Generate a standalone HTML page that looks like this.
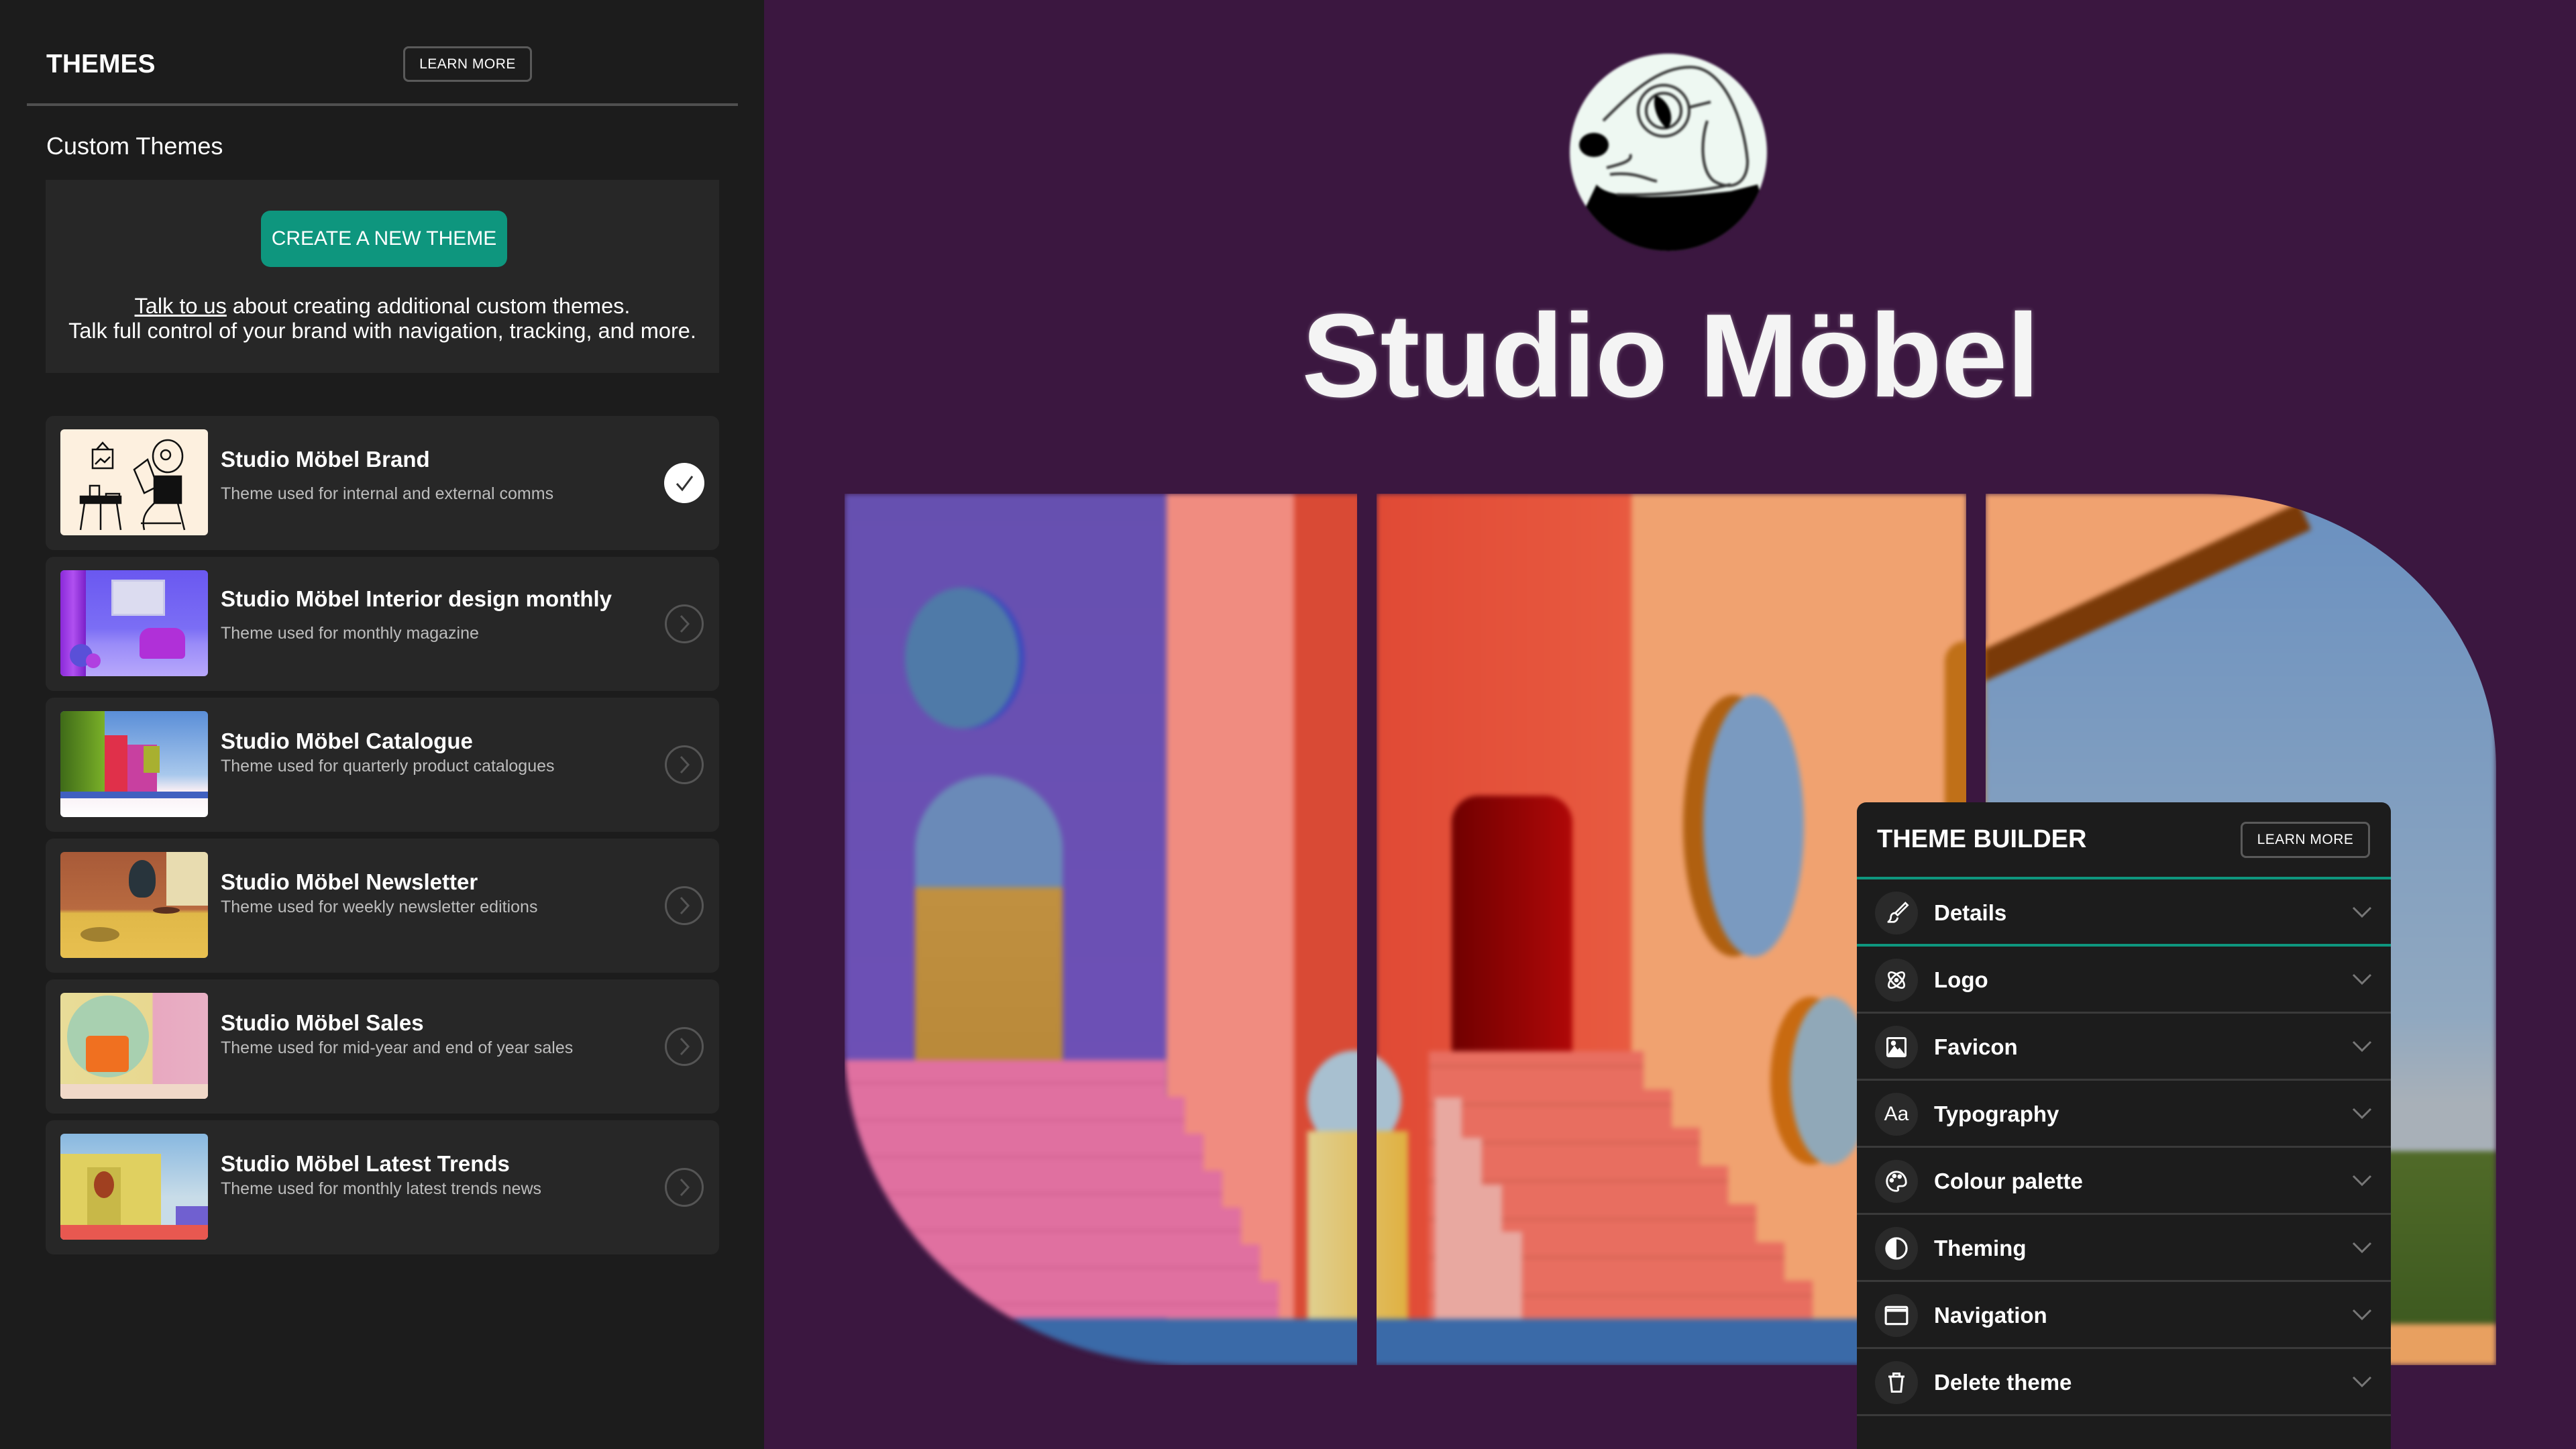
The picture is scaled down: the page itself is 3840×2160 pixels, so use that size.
<!DOCTYPE html>
<html><head><meta charset="utf-8"><style>
*{margin:0;padding:0;box-sizing:border-box}
body{width:3840px;height:2160px;overflow:hidden;background:#3b1740;font-family:"Liberation Sans",sans-serif;position:relative;color:#fff}
.left{position:absolute;left:0;top:0;width:1139px;height:2160px;background:#1c1c1c}
.abs{position:absolute}
.btn-o{position:absolute;border:3px solid #5a5a5a;border-radius:8px;color:#fff;font-size:21px;display:flex;align-items:center;justify-content:center;letter-spacing:0.5px}
.item{position:absolute;left:68px;width:1004px;height:200px;background:#272727;border-radius:12px}
.thumb{position:absolute;left:22px;top:20px;width:220px;height:158px;border-radius:6px;overflow:hidden}
.it{position:absolute;left:261px;font-size:33px;font-weight:bold;white-space:nowrap}
.is{position:absolute;left:261px;font-size:25px;color:#bdbdbd;white-space:nowrap}
.chev{position:absolute;left:923px;top:71px;width:58px;height:58px;border:3px solid #555;border-radius:50%}
.tb{position:absolute;left:2768px;top:1196px;width:796px;height:964px;background:#1c1c1c;border-radius:14px 14px 0 0;overflow:hidden}
.row{position:absolute;left:0;width:796px;height:100px;border-bottom:3px solid #3a3a3a}
.ic{position:absolute;left:27px;top:18px;width:64px;height:64px;border-radius:50%;background:#2a2a2a;display:flex;align-items:center;justify-content:center}
.rt{position:absolute;left:115px;top:0;line-height:100px;font-size:33px;font-weight:bold}
.dn{position:absolute;left:738px;top:40px}
</style></head><body>
<div class="left">
  <div class="abs" style="left:69px;top:74px;font-size:39px;font-weight:bold;">THEMES</div>
  <div class="btn-o" style="left:601px;top:69px;width:192px;height:53px;">LEARN MORE</div>
  <div class="abs" style="left:40px;top:154px;width:1060px;height:4px;background:#505050"></div>
  <div class="abs" style="left:69px;top:197px;font-size:36px;">Custom Themes</div>
  <div class="abs" style="left:68px;top:268px;width:1004px;height:288px;background:#272727"></div>
  <div class="abs" style="left:389px;top:314px;width:367px;height:84px;background:#0e967e;border-radius:14px;font-size:30px;display:flex;align-items:center;justify-content:center">CREATE A NEW THEME</div>
  <div class="abs" style="left:68px;top:438px;width:1004px;text-align:center;font-size:32.5px;line-height:37px"><span style="text-decoration:underline">Talk to us</span> about creating additional custom themes.<br>Talk full control of your brand with navigation, tracking, and more.</div>

  <div class="item" style="top:620px">
    <div class="thumb" style="background:#fdf0df">
      <svg width="220" height="158" viewBox="0 0 220 158" fill="none" stroke="#111" stroke-width="2.5">
        <rect x="48" y="30" width="30" height="28"/><path d="M52 52l8-8 6 5 8-8"/><path d="M54 30l9-10 9 10"/>
        <rect x="30" y="100" width="60" height="10" fill="#111"/><path d="M36 110l-6 40M84 110l6 40M60 110v40"/>
        <rect x="44" y="84" width="14" height="16"/><path d="M68 96h20v4H68z"/>
        <path d="M110 60l20-15 15 40-20 10z" fill="#fdf0df"/>
        <ellipse cx="160" cy="40" rx="22" ry="24" fill="#fdf0df"/><circle cx="157" cy="38" r="7"/>
        <path d="M140 70h40v40h-40z" fill="#111"/><path d="M140 110c-10 10-20 20-15 40M175 110l10 40M120 140h60"/>
      </svg>
    </div>
    <div class="it" style="top:46px">Studio Möbel Brand</div>
    <div class="is" style="top:102px">Theme used for internal and external comms</div>
    <div class="abs" style="left:922px;top:70px;width:60px;height:60px;border-radius:50%;background:#fff">
      <svg width="60" height="60" viewBox="0 0 60 60"><path d="M19 31l8 9 15-20" fill="none" stroke="#333" stroke-width="3"/></svg>
    </div>
  </div>

  <div class="item" style="top:830px">
    <div class="thumb" style="background:linear-gradient(180deg,#6a58f0 0%,#7b6ef5 55%,#9a8cf8 70%,#b8a8fb 100%)">
      <div class="abs" style="left:0;top:0;width:38px;height:158px;background:linear-gradient(90deg,#8a2ad8,#b050f0,#7a20c8)"></div>
      <div class="abs" style="left:76px;top:14px;width:80px;height:54px;background:#dcdcf0;border:3px solid #c8c8ea"></div>
      <div class="abs" style="left:118px;top:86px;width:68px;height:46px;background:#b030d8;border-radius:16px 16px 6px 6px"></div>
      <div class="abs" style="left:14px;top:110px;width:34px;height:34px;border-radius:50%;background:#5a50d8"></div>
      <div class="abs" style="left:38px;top:124px;width:22px;height:22px;border-radius:50%;background:#b040e0"></div>
    </div>
    <div class="it" style="top:44px">Studio Möbel Interior design monthly</div>
    <div class="is" style="top:100px">Theme used for monthly magazine</div>
    <div class="chev"><svg width="52" height="52" viewBox="0 0 52 52"><path d="M21 14l11 12-11 12" fill="none" stroke="#555" stroke-width="3"/></svg></div>
  </div>

  <div class="item" style="top:1040px">
    <div class="thumb" style="background:linear-gradient(180deg,#5a8ed8 0%,#a8c8ec 60%,#f8eef4 75%,#fff 100%)">
      <div class="abs" style="left:0;top:0;width:66px;height:120px;background:linear-gradient(90deg,#3e6a18,#7ab028)"></div>
      <div class="abs" style="left:66px;top:36px;width:34px;height:84px;background:#e0304a"></div>
      <div class="abs" style="left:100px;top:50px;width:44px;height:70px;background:#c840a0"></div>
      <div class="abs" style="left:124px;top:52px;width:24px;height:40px;background:#a8b030"></div>
      <div class="abs" style="left:0;top:120px;width:220px;height:10px;background:#4060c0"></div>
    </div>
    <div class="it" style="top:46px">Studio Möbel Catalogue</div>
    <div class="is" style="top:88px">Theme used for quarterly product catalogues</div>
    <div class="chev"><svg width="52" height="52" viewBox="0 0 52 52"><path d="M21 14l11 12-11 12" fill="none" stroke="#555" stroke-width="3"/></svg></div>
  </div>

  <div class="item" style="top:1250px">
    <div class="thumb" style="background:linear-gradient(180deg,#a85a38 0%,#b86a40 54%,#e0b848 58%,#e8c050 100%)">
      <div class="abs" style="left:158px;top:0;width:62px;height:80px;background:#e8dcb0"></div>
      <div class="abs" style="left:102px;top:12px;width:40px;height:56px;border-radius:50% 50% 40% 40%;background:#28343c"></div>
      <div class="abs" style="left:138px;top:82px;width:40px;height:10px;border-radius:50%;background:#5a3020"></div>
      <div class="abs" style="left:30px;top:112px;width:58px;height:22px;border-radius:50%;background:#a08030"></div>
    </div>
    <div class="it" style="top:46px">Studio Möbel Newsletter</div>
    <div class="is" style="top:88px">Theme used for weekly newsletter editions</div>
    <div class="chev"><svg width="52" height="52" viewBox="0 0 52 52"><path d="M21 14l11 12-11 12" fill="none" stroke="#555" stroke-width="3"/></svg></div>
  </div>

  <div class="item" style="top:1460px">
    <div class="thumb" style="background:linear-gradient(90deg,#e8dc98 0%,#e8d890 62%,#e8a8c0 63%,#e8b0c4 100%)">
      <div class="abs" style="left:10px;top:4px;width:122px;height:122px;border-radius:50%;background:#a8d0b0"></div>
      <div class="abs" style="left:38px;top:64px;width:64px;height:54px;background:#f07020;border-radius:6px"></div>
      <div class="abs" style="left:0;top:136px;width:220px;height:22px;background:#f0d8c8"></div>
    </div>
    <div class="it" style="top:46px">Studio Möbel Sales</div>
    <div class="is" style="top:88px">Theme used for mid-year and end of year sales</div>
    <div class="chev"><svg width="52" height="52" viewBox="0 0 52 52"><path d="M21 14l11 12-11 12" fill="none" stroke="#555" stroke-width="3"/></svg></div>
  </div>

  <div class="item" style="top:1670px">
    <div class="thumb" style="background:linear-gradient(180deg,#88b8e0 0%,#c8dce8 60%)">
      <div class="abs" style="left:0;top:30px;width:150px;height:108px;background:#e0d060"></div>
      <div class="abs" style="left:40px;top:50px;width:50px;height:88px;background:#c8b848"></div>
      <div class="abs" style="left:50px;top:56px;width:30px;height:40px;border-radius:50%;background:#a04020"></div>
      <div class="abs" style="left:172px;top:108px;width:48px;height:30px;background:#7060d0"></div>
      <div class="abs" style="left:0;top:136px;width:220px;height:22px;background:#e85850"></div>
    </div>
    <div class="it" style="top:46px">Studio Möbel Latest Trends</div>
    <div class="is" style="top:88px">Theme used for monthly latest trends news</div>
    <div class="chev"><svg width="52" height="52" viewBox="0 0 52 52"><path d="M21 14l11 12-11 12" fill="none" stroke="#555" stroke-width="3"/></svg></div>
  </div>
</div>

<!-- logo -->
<svg class="abs" style="left:2320px;top:60px;filter:blur(1.5px)" width="340" height="340" viewBox="0 0 340 340">
  <defs><clipPath id="c"><circle cx="167" cy="167" r="147"/></clipPath></defs>
  <circle cx="167" cy="167" r="147" fill="#eef8f2"/>
  <path d="M60 215 C80 240 170 235 260 225 L300 215 L340 340 L0 340Z" fill="#000" clip-path="url(#c)"/>
  <g fill="none" stroke="#333" stroke-width="4">
    <path d="M70 120 C110 80 150 40 200 40 C250 40 280 120 285 180 C285 215 260 225 235 210 C215 195 215 150 225 120"/>
    <circle cx="160" cy="105" r="38"/><circle cx="160" cy="105" r="26"/>
    <path d="M198 100 L230 92"/>
    <path d="M75 190 C95 185 115 180 110 170 M80 200 C120 195 140 210 150 210 M90 230 C150 232 220 225 260 215"/>
  </g>
  <path d="M148 82 C170 90 178 120 165 132 C150 120 142 95 148 82Z" fill="#000"/>
  <ellipse cx="56" cy="156" rx="22" ry="18" fill="#000"/>
</svg>
<div class="abs" style="left:1800px;top:430px;width:1380px;text-align:center;font-size:177px;font-weight:bold;color:#f4f4f4;letter-spacing:-1px;line-height:200px;text-shadow:0 0 6px rgba(255,255,255,0.4)">Studio Möbel</div>

<!-- scene -->
<div class="abs" style="left:1259px;top:736px;width:2462px;height:1299px;overflow:hidden;border-radius:0 440px 0 0/0 410px 0 0;">
  <div class="abs" style="left:0;top:0;width:2462px;height:1299px;border-radius:0 0 0 520px/0 0 0 480px;overflow:hidden;filter:blur(4px)">
    <div class="abs" style="left:0;top:0;width:480px;height:1299px;background:linear-gradient(180deg,#6650b0,#7050b8)"></div>
    <div class="abs" style="left:90px;top:140px;width:170px;height:210px;border-radius:50%;background:#4f7aa8;box-shadow:8px 0 0 #3848c0"></div>
    <div class="abs" style="left:105px;top:420px;width:220px;height:470px;border-radius:110px 110px 0 0;background:linear-gradient(180deg,#6a8ab8 0%,#6a8ab8 35%,#c09040 36%,#b88838 100%)"></div>
    <div class="abs" style="left:480px;top:0;width:190px;height:1299px;background:#f08c80"></div>
    <div class="abs" style="left:670px;top:0;width:100px;height:1299px;background:#d94a35"></div>
    <div class="abs" style="left:0;top:0;width:800px;height:1299px;background:repeating-linear-gradient(180deg,#e070a0 0 52px,#d06090 52px 55px);clip-path:polygon(0 844px,479px 844px,479px 899px,507px 899px,507px 954px,535px 954px,535px 1009px,563px 1009px,563px 1064px,591px 1064px,591px 1119px,619px 1119px,619px 1174px,647px 1174px,647px 1229px,0 1229px)"></div>
    <div class="abs" style="left:793px;top:0;width:380px;height:1299px;background:linear-gradient(90deg,#e04a35,#e85a40)"></div>
    <div class="abs" style="left:1173px;top:0;width:500px;height:1299px;background:#f0a270"></div>
    <div class="abs" style="left:905px;top:450px;width:180px;height:430px;border-radius:40px 40px 0 0;background:linear-gradient(90deg,#700000,#b00808)"></div>
    <div class="abs" style="left:0;top:0;width:1500px;height:1299px;background:repeating-linear-gradient(180deg,#e86e60 0 54px,#d06050 54px 57px);clip-path:polygon(871px 831px,1191px 831px,1191px 888px,1233px 888px,1233px 945px,1275px 945px,1275px 1002px,1317px 1002px,1317px 1059px,1359px 1059px,1359px 1116px,1401px 1116px,1401px 1173px,1443px 1173px,1443px 1230px,871px 1230px)"></div>
    <div class="abs" style="left:880px;top:900px;width:130px;height:330px;background:#e8a8a0;clip-path:polygon(0 0,40px 0,40px 60px,70px 60px,70px 130px,100px 130px,100px 200px,130px 200px,130px 330px,0 330px)"></div>
    <div class="abs" style="left:690px;top:830px;width:140px;height:150px;border-radius:50%;background:#a8c0d0"></div>
    <div class="abs" style="left:690px;top:950px;width:150px;height:280px;background:linear-gradient(90deg,#e0d090,#e0b040)"></div>
    <div class="abs" style="left:0;top:1230px;width:2462px;height:70px;background:#3a6aa8"></div>
    <div class="abs" style="left:1280px;top:300px;width:150px;height:390px;border-radius:50%;background:#7a9ac0;box-shadow:-30px 0 0 #b06010"></div>
    <div class="abs" style="left:1410px;top:750px;width:120px;height:250px;border-radius:50%;background:#90a8b8;box-shadow:-30px 0 0 #c86a10"></div>
    <div class="abs" style="left:1700px;top:0;width:762px;height:1299px;background:linear-gradient(180deg,#6a90c0 0%,#90a8c0 60%,#a8b0b8 70%)"></div>
    <div class="abs" style="left:1700px;top:0;width:762px;height:1299px;background:#f0a270;clip-path:polygon(0 0,520px 0,0 250px)"></div>
    <div class="abs" style="left:1660px;top:250px;width:560px;height:44px;background:#7a3a08;transform-origin:0 0;transform:rotate(-25deg)"></div>
    <div class="abs" style="left:1640px;top:220px;width:60px;height:1080px;background:#c07018;border-radius:30px 0 0 0"></div>
    <div class="abs" style="left:2200px;top:980px;width:262px;height:320px;background:linear-gradient(180deg,#506a28,#3e5a20 80%,#e8a060 81%)"></div>
  </div>
  <div class="abs" style="left:764px;top:0;width:29px;height:1299px;background:#3b1740"></div>
  <div class="abs" style="left:1672px;top:0;width:29px;height:1299px;background:#3b1740"></div>
</div>

<!-- theme builder -->
<div class="tb">
  <div class="abs" style="left:30px;top:34px;font-size:38px;font-weight:bold;">THEME BUILDER</div>
  <div class="btn-o" style="left:572px;top:29px;width:193px;height:54px;">LEARN MORE</div>
  <div class="abs" style="left:0;top:111px;width:796px;height:4px;background:#0e967e"></div>
  <div class="row" style="top:115px;border-bottom:4px solid #0e967e;height:100px">
    <div class="ic"><svg width="40" height="40" viewBox="0 0 24 24" fill="none" stroke="#fff" stroke-width="1.6"><path d="M20 3L11 12l2 2 9-9-2-2z"/><path d="M11 12c-3 0-4 2-4 4s-2 4-3 4h5c2 0 4-2 4-4"/></svg></div>
    <div class="rt">Details</div><svg class="dn" width="30" height="18" viewBox="0 0 30 18"><path d="M2 2l13 13L28 2" fill="none" stroke="#777" stroke-width="3"/></svg>
  </div>
  <div class="row" style="top:215px">
    <div class="ic"><svg width="36" height="36" viewBox="0 0 24 24" fill="none" stroke="#fff" stroke-width="1.8"><ellipse cx="12" cy="12" rx="10" ry="4.5" transform="rotate(45 12 12)"/><ellipse cx="12" cy="12" rx="10" ry="4.5" transform="rotate(-45 12 12)"/><circle cx="12" cy="12" r="1.3" fill="#fff"/></svg></div>
    <div class="rt">Logo</div><svg class="dn" width="30" height="18" viewBox="0 0 30 18"><path d="M2 2l13 13L28 2" fill="none" stroke="#777" stroke-width="3"/></svg>
  </div>
  <div class="row" style="top:315px">
    <div class="ic"><svg width="36" height="36" viewBox="0 0 24 24" fill="none" stroke="#fff" stroke-width="2"><rect x="3" y="3" width="18" height="18" rx="1"/><path d="M5 19l5-7 3 4 2-2 4 5z" fill="#fff"/><circle cx="9" cy="8" r="1.5" fill="#fff"/></svg></div>
    <div class="rt">Favicon</div><svg class="dn" width="30" height="18" viewBox="0 0 30 18"><path d="M2 2l13 13L28 2" fill="none" stroke="#777" stroke-width="3"/></svg>
  </div>
  <div class="row" style="top:415px">
    <div class="ic"><span style="font-size:30px;color:#fff;">Aa</span></div>
    <div class="rt">Typography</div><svg class="dn" width="30" height="18" viewBox="0 0 30 18"><path d="M2 2l13 13L28 2" fill="none" stroke="#777" stroke-width="3"/></svg>
  </div>
  <div class="row" style="top:515px">
    <div class="ic"><svg width="38" height="38" viewBox="0 0 24 24" fill="none" stroke="#fff" stroke-width="1.8"><path d="M12 3a9 9 0 1 0 0 18c1.5 0 2-1 1.5-2s0-2.5 1.5-2.5h2.5A3.5 3.5 0 0 0 21 13c0-5.5-4-10-9-10z"/><circle cx="7.5" cy="11" r="1.2" fill="#fff"/><circle cx="10" cy="7" r="1.2" fill="#fff"/><circle cx="15" cy="7.5" r="1.2" fill="#fff"/></svg></div>
    <div class="rt">Colour palette</div><svg class="dn" width="30" height="18" viewBox="0 0 30 18"><path d="M2 2l13 13L28 2" fill="none" stroke="#777" stroke-width="3"/></svg>
  </div>
  <div class="row" style="top:615px">
    <div class="ic"><svg width="38" height="38" viewBox="0 0 24 24"><circle cx="12" cy="12" r="9.5" fill="none" stroke="#fff" stroke-width="2"/><path d="M12 2.5a9.5 9.5 0 0 0 0 19z" fill="#fff"/></svg></div>
    <div class="rt">Theming</div><svg class="dn" width="30" height="18" viewBox="0 0 30 18"><path d="M2 2l13 13L28 2" fill="none" stroke="#777" stroke-width="3"/></svg>
  </div>
  <div class="row" style="top:715px">
    <div class="ic"><svg width="38" height="38" viewBox="0 0 24 24" fill="none" stroke="#fff" stroke-width="2"><rect x="2" y="4" width="20" height="16" rx="1"/><path d="M2 7h20" stroke-width="3"/></svg></div>
    <div class="rt">Navigation</div><svg class="dn" width="30" height="18" viewBox="0 0 30 18"><path d="M2 2l13 13L28 2" fill="none" stroke="#777" stroke-width="3"/></svg>
  </div>
  <div class="row" style="top:815px">
    <div class="ic"><svg width="36" height="36" viewBox="0 0 24 24" fill="none" stroke="#fff" stroke-width="2"><path d="M4 6h16M9 6V3h6v3M6 6l1.5 15h9L18 6"/></svg></div>
    <div class="rt">Delete theme</div><svg class="dn" width="30" height="18" viewBox="0 0 30 18"><path d="M2 2l13 13L28 2" fill="none" stroke="#777" stroke-width="3"/></svg>
  </div>
</div>
</body></html>
